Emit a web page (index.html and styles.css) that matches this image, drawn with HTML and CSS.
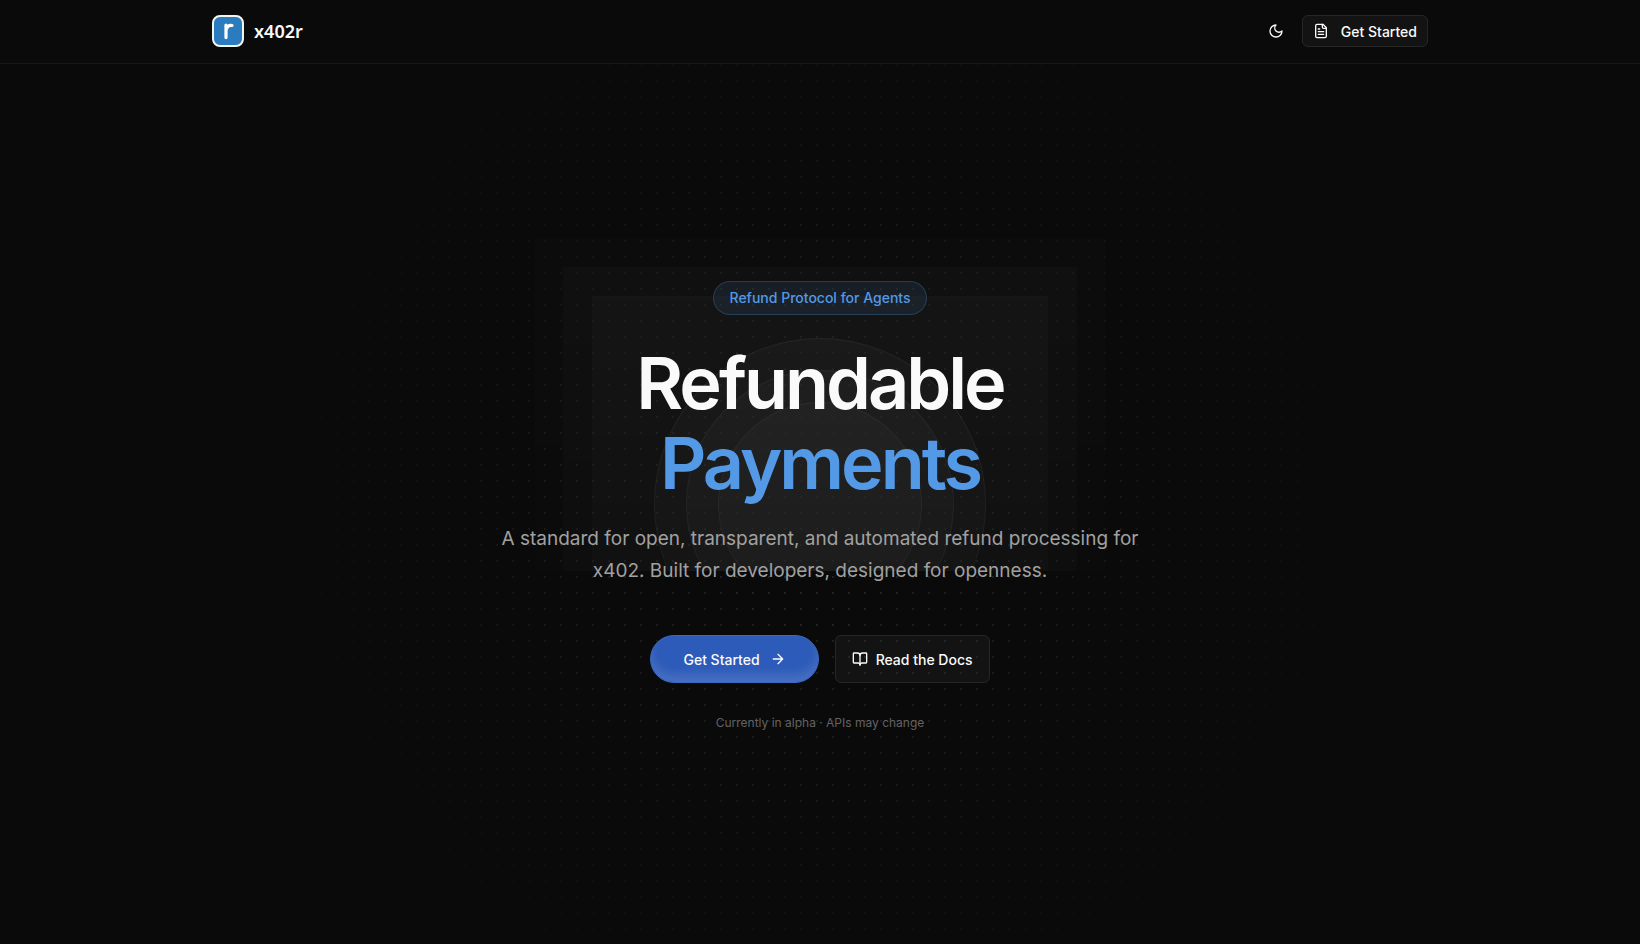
FILE: index.html
```
<!DOCTYPE html>
<html lang="en">
<head>
    <meta charset="UTF-8">
    <meta name="viewport" content="width=device-width, initial-scale=1.0">
    <title>x402r</title>
    <link rel="stylesheet" href="styles.css">
</head>
<body>
    <header class="navbar">
        <nav class="container">
            <a class="brand" href="#">
                <svg class="logo" viewBox="0 0 32 32" aria-hidden="true">
                    <rect x="1" y="1" width="30" height="30" rx="7" fill="#2b7bbf" stroke="#f3f6ee" stroke-width="2"/>
                    <path d="M14 10V22.6M14 15.5c.4-3.6 2.8-5.6 6-5" fill="none" stroke="#fff" stroke-width="3.2" stroke-linecap="round"/>
                </svg>
                <span>x402r</span>
            </a>
            <div class="nav-actions">
                <button class="theme-toggle" type="button" aria-label="Toggle theme">
                    <svg class="icon" viewBox="0 0 24 24"><path d="M12 3a6 6 0 0 0 9 9 9 9 0 1 1-9-9Z"/></svg>
                </button>
                <a class="button button-small" href="#">
                    <svg class="icon" viewBox="0 0 24 24"><path d="M15 2H6a2 2 0 0 0-2 2v16a2 2 0 0 0 2 2h12a2 2 0 0 0 2-2V7Z"/><path d="M14 2v4a2 2 0 0 0 2 2h4M10 9H8M16 13H8M16 17H8"/></svg>
                    Get Started
                </a>
            </div>
        </nav>
    </header>

    <main class="hero">
        <div class="ripple">
            <div class="glow glow-1"></div>
            <div class="glow glow-2"></div>
            <div class="glow glow-3"></div>
            <div class="ring ring-1"></div>
            <div class="ring ring-2"></div>
            <div class="ring ring-3"></div>
        </div>
        <div class="dots"></div>

        <div class="hero-content">
            <span class="badge">Refund Protocol for Agents</span>
            <h1>Refundable<br><span class="accent">Payments</span></h1>
            <p class="lead">A standard for open, transparent, and automated refund processing for x402. Built for developers, designed for openness.</p>
            <div class="actions">
                <a class="button button-primary" href="#">
                    Get Started
                    <svg class="icon" viewBox="0 0 24 24"><path d="M5 12h14M12 5l7 7-7 7"/></svg>
                </a>
                <a class="button button-outline" href="#">
                    <svg class="icon" viewBox="0 0 24 24"><path d="M12 7v14"/><path d="M3 18a1 1 0 0 1-1-1V4a1 1 0 0 1 1-1h5a4 4 0 0 1 4 4 4 4 0 0 1 4-4h5a1 1 0 0 1 1 1v13a1 1 0 0 1-1 1h-6a3 3 0 0 0-3 3 3 3 0 0 0-3-3z"/></svg>
                    Read the Docs
                </a>
            </div>
            <p class="note">Currently in alpha · APIs may change</p>
        </div>
    </main>
</body>
</html>
```
FILE: styles.css
```
* {
    box-sizing: border-box;
}
body {
    margin: 0;
    min-height: 100vh;
    display: flex;
    flex-direction: column;
    font-family: Inter, "Liberation Sans", sans-serif;
    font-size: 14px;
    background-color: #0a0a0a;
    color: #fafafa;
}
a {
    color: inherit;
    text-decoration: none;
}
.icon {
    width: 16px;
    height: 16px;
    fill: none;
    stroke: currentColor;
    stroke-width: 2;
    stroke-linecap: round;
    stroke-linejoin: round;
}

/* Navbar */
.navbar {
    height: 64px;
    border-bottom: 1px solid #171717;
}
.container {
    max-width: 1280px;
    height: 62px;
    margin: 0 auto;
    padding: 0 32px;
    display: flex;
    align-items: center;
    justify-content: space-between;
}
.brand {
    display: flex;
    align-items: center;
    gap: 10px;
    font-family: "Noto Sans", sans-serif;
    font-size: 18px;
    font-weight: 600;
}
.logo {
    width: 32px;
    height: 32px;
}
.nav-actions {
    display: flex;
    align-items: center;
    gap: 10px;
}
.theme-toggle {
    display: grid;
    place-items: center;
    width: 32px;
    height: 32px;
    padding: 0;
    border: 0;
    background: none;
    color: inherit;
}
.button {
    display: inline-flex;
    align-items: center;
    gap: 8px;
    font-weight: 500;
    border: 1px solid #262626;
    border-radius: 6px;
    background-color: rgba(255, 255, 255, 0.04);
}
.button-small {
    height: 32px;
    gap: 12px;
    padding: 0 10px;
}

/* Hero */
.hero {
    position: relative;
    flex: 1;
    display: flex;
    align-items: center;
    justify-content: center;
    overflow: hidden;
}
.dots {
    position: absolute;
    inset: 0;
    background-image: radial-gradient(circle at 1px 1px, #262626 1px, transparent 0);
    background-size: 16px 16px;
    -webkit-mask-image: radial-gradient(560px circle at center, #fff, transparent);
    mask-image: radial-gradient(560px circle at center, #fff, transparent);
}

/* fades down, then stops at the second line of the lead */
.ripple {
    position: absolute;
    inset: 0;
    -webkit-mask-image: linear-gradient(#fff, rgba(255, 255, 255, 0.5) 507px, transparent 507px);
    mask-image: linear-gradient(#fff, rgba(255, 255, 255, 0.5) 507px, transparent 507px);
}
.glow,
.ring {
    position: absolute;
    top: 50%;
    left: 50%;
    transform: translate(-50%, -50%);
}
.glow-1 {
    width: 570px;
    height: 532px;
    background-color: rgba(255, 255, 255, 0.014);
}
.glow-2 {
    width: 514px;
    height: 474px;
    background-color: rgba(255, 255, 255, 0.022);
}
.glow-3 {
    width: 456px;
    height: 416px;
    background-color: rgba(255, 255, 255, 0.026);
}
.ring {
    border: 1px solid rgba(255, 255, 255, 0.08);
    border-radius: 50%;
    background-color: rgba(255, 255, 255, 0.034);
}
.ring-1 {
    width: 332px;
    height: 332px;
}
.ring-2 {
    width: 268px;
    height: 268px;
}
.ring-3 {
    width: 204px;
    height: 204px;
}
.hero-content {
    position: relative;
    width: 100%;
    max-width: 704px;
    padding: 4px 16px 0;
    display: flex;
    flex-direction: column;
    align-items: center;
    text-align: center;
}
.badge {
    padding: 6px 16px;
    border: 1px solid rgba(84, 153, 230, 0.25);
    border-radius: 17px;
    background-color: rgba(84, 153, 230, 0.1);
    color: #5499e6;
    font-weight: 500;
    line-height: 20px;
}
h1 {
    margin: 28px 0 20px;
    font-size: 72px;
    font-weight: 600;
    line-height: 80px;
    letter-spacing: -3px;
}
.accent {
    color: #5499e6;
}
.lead {
    margin: 0 0 48px;
    color: #a1a1a1;
    font-size: 19px;
    line-height: 32px;
}
.actions {
    display: flex;
    gap: 16px;
}
.button-primary,
.button-outline {
    height: 48px;
}
.button-primary {
    gap: 10px;
    padding: 0 32px;
    border-color: #3a68c2;
    border-radius: 24px;
    background-color: #2d5bb9;
    box-shadow: inset 0 -8px 10px rgba(255, 255, 255, 0.12);
}
.button-outline {
    padding: 0 16px;
}
.note {
    margin: 32px 0 0;
    color: #636363;
    font-size: 12px;
    line-height: 16px;
}
```
